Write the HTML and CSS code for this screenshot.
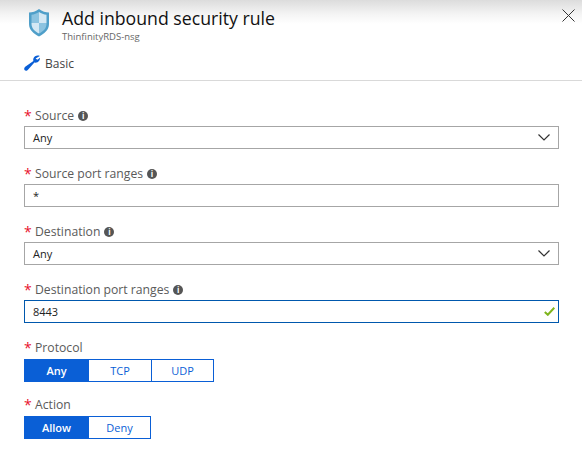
FILE: index.html
```html
<!DOCTYPE html>
<html>
<head>
    <title>Add inbound security rule</title>
    <link rel="stylesheet" href="styles.css">
</head>
<body>
    <header class="blade-header">
        <svg class="shield" width="22" height="28" viewBox="0 0 22 28">
            <path d="M11 0 C8 2.5 4 3.5 1 3.5 L1 15 C1 21 6 25 11 27.5 C16 25 21 21 21 15 L21 3.5 C18 3.5 14 2.5 11 0 Z" fill="#4f9fc9"/>
            <path d="M11 3 C9 4.5 6 5.5 3.5 5.7 L3.5 14 L11 14 Z" fill="#8cc3e0"/>
            <path d="M11 3 C13 4.5 16 5.5 18.5 5.7 L18.5 14 L11 14 Z" fill="#d4e8f4"/>
            <path d="M3.5 14 L11 14 L11 24.5 C7 22.5 3.5 19.5 3.5 15 Z" fill="#d4e8f4"/>
            <path d="M18.5 14 L11 14 L11 24.5 C15 22.5 18.5 19.5 18.5 15 Z" fill="#8cc3e0"/>
        </svg>
        <div class="titles">
            <h1>Add inbound security rule</h1>
            <p>ThinfinityRDS-nsg</p>
        </div>
        <svg class="close" width="13" height="13" viewBox="0 0 13 13">
            <path d="M0.5 0.5 L12.5 12.5 M12.5 0.5 L0.5 12.5" stroke="#333" stroke-width="1" fill="none"/>
        </svg>
    </header>

    <div class="tab">
        <svg width="16" height="16" viewBox="0 0 16 16">
            <path d="M15.8 0.9 C13.2 -0.3 10.2 1 9.4 3.4 C9.1 4.4 9.2 5.2 9.4 5.9 L1.6 11.6 C-0.2 13 0 14.6 0.8 15.3 C1.7 16.2 3.2 15.8 4.2 14.4 L10.4 7.6 C12.2 8 14.2 7.2 15.2 5.7 C15.8 4.8 16.1 3.8 16 2.8 L13.4 4.8 L11.6 3.4 Z" fill="#0a5fd6"/>
        </svg>
        <span>Basic</span>
    </div>

    <form class="form">
        <div class="field">
            <label><b>*</b> Source <i class="info">i</i></label>
            <div class="input">
                <span>Any</span>
                <svg class="chevron" width="12" height="7" viewBox="0 0 12 7"><path d="M0.5 0.5 L6 6 L11.5 0.5" stroke="#333" stroke-width="1.2" fill="none"/></svg>
            </div>
        </div>
        <div class="field">
            <label><b>*</b> Source port ranges <i class="info">i</i></label>
            <div class="input"><span>*</span></div>
        </div>
        <div class="field">
            <label><b>*</b> Destination <i class="info">i</i></label>
            <div class="input">
                <span>Any</span>
                <svg class="chevron" width="12" height="7" viewBox="0 0 12 7"><path d="M0.5 0.5 L6 6 L11.5 0.5" stroke="#333" stroke-width="1.2" fill="none"/></svg>
            </div>
        </div>
        <div class="field">
            <label><b>*</b> Destination port ranges <i class="info">i</i></label>
            <div class="input focused">
                <span>8443</span>
                <svg width="11" height="9" viewBox="0 0 11 9"><path d="M0.8 5 L3.8 7.8 L10.3 0.8" stroke="#7fb51e" stroke-width="2" fill="none"/></svg>
            </div>
        </div>
        <div class="field short">
            <label><b>*</b> Protocol</label>
            <div class="toggle">
                <span class="on">Any</span>
                <span>TCP</span>
                <span>UDP</span>
            </div>
        </div>
        <div class="field short">
            <label><b>*</b> Action</label>
            <div class="toggle">
                <span class="on">Allow</span>
                <span>Deny</span>
            </div>
        </div>
    </form>
</body>
</html>
```

FILE: styles.css
```css
* {
    box-sizing: border-box;
    margin: 0;
    padding: 0;
}

body {
    font-family: "Open Sans", "Noto Sans", sans-serif;
    background-color: #fff;
    color: #222;
    width: 582px;
    height: 451px;
    overflow: hidden;
}

.blade-header {
    display: flex;
    align-items: flex-start;
    height: 45px;
    padding: 9px 7px 0 28px;
    background: linear-gradient(#dcdcdc 0, #f4f4f4 14px, #fff 24px);
}

.shield {
    margin-right: 12px;
}

.titles {
    flex: 1;
    margin-top: -3px;
}

.titles h1 {
    font-size: 17.7px;
    font-weight: 400;
    line-height: 25px;
    color: #111;
}

.titles p {
    font-size: 9.5px;
    line-height: 11px;
    color: #666;
}

.tab {
    display: flex;
    align-items: center;
    gap: 5px;
    height: 36px;
    padding: 1px 0 0 24px;
    border-bottom: 1px solid #d9d9d9;
    font-size: 12px;
    color: #444;
}

.form {
    padding: 26px 23px 0 24px;
}

.field {
    height: 58px;
}

.field.short {
    height: 57px;
}

.field label {
    display: flex;
    align-items: center;
    gap: 4px;
    height: 19px;
    padding-bottom: 2px;
    font-size: 12.2px;
    color: #5a5a5a;
}

.field label b {
    width: 6px;
    margin-right: 1px;
    font-weight: 400;
    font-size: 14px;
    color: #e8112d;
}

.info {
    display: inline-block;
    width: 10px;
    height: 10px;
    margin-left: 0;
    border-radius: 50%;
    background-color: #555;
    color: #fff;
    font-size: 8px;
    font-style: normal;
    font-weight: 700;
    line-height: 10px;
    text-align: center;
}

.input {
    display: flex;
    align-items: center;
    justify-content: space-between;
    height: 23px;
    padding: 0 3px 0 8px;
    border: 1px solid #a6a6a6;
    font-size: 11px;
    color: #222;
}

.input.focused {
    border-color: #0058ad;
}

.chevron {
    margin-right: 5px;
}

.toggle {
    display: inline-flex;
    height: 23px;
    border: 1px solid #0a5fd6;
    font-size: 11px;
    color: #0a5fd6;
}

.toggle span {
    width: 63px;
    line-height: 21px;
    text-align: center;
    border-left: 1px solid #0a5fd6;
}

.toggle span:first-child {
    border-left: none;
}

.toggle span:last-child {
    width: 62px;
}

.toggle .on {
    background-color: #0a5fd6;
    color: #fff;
    font-weight: 600;
}
```
